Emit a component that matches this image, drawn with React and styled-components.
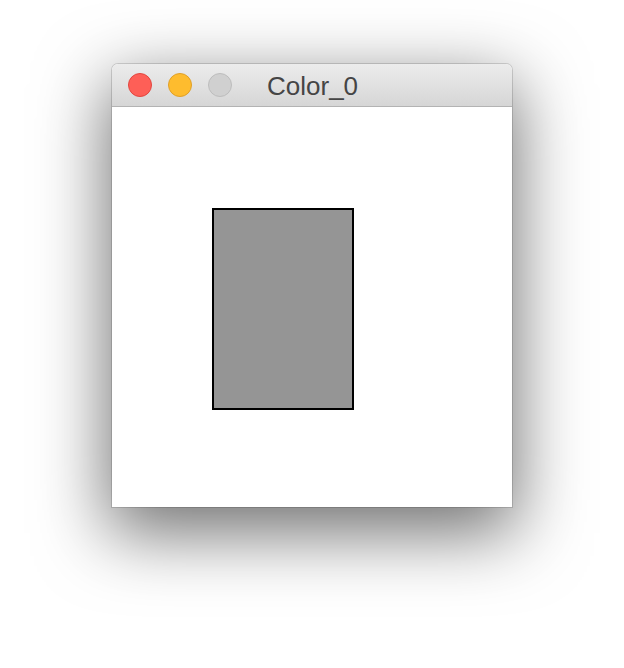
import styled, {createGlobalStyle} from "styled-components";

const GlobalStyle = createGlobalStyle`
  html, body {
    margin: 0;
    padding: 0;
    background: #ffffff;
  }
`;

const Page = styled.div`
  width: 624px;
  height: 668px;
  display: flex;
  justify-content: center;
  align-items: flex-start;
  padding-top: 64px;
  box-sizing: border-box;
  background: #ffffff;
`;

const Window = styled.div`
  width: 400px;
  display: flex;
  flex-direction: column;
  border-radius: 6px 6px 0 0;
  box-shadow: 0 22px 70px 4px rgba(0, 0, 0, 0.56), 0 0 0 1px rgba(0, 0, 0, 0.14);
`;

const TitleBar = styled.div`
  height: 42px;
  display: flex;
  align-items: center;
  padding-left: 16px;
  gap: 16px;
  background: linear-gradient(#ececec, #d6d6d6);
  border-bottom: 1px solid #b3b3b3;
  border-radius: 6px 6px 0 0;
`;

const Light = styled.span`
  width: 24px;
  height: 24px;
  border-radius: 50%;
  box-sizing: border-box;
  background: ${p => p.$fill};
  border: 1px solid ${p => p.$edge};
`;

const Title = styled.span`
  margin-left: 19px;
  padding-top: 2px;
  font-family: "Liberation Sans", Arial, sans-serif;
  font-size: 26px;
  color: #454545;
  line-height: 1;
`;

const Canvas = styled.div`
  width: 400px;
  height: 400px;
  background: #ffffff;
  padding: 101px 0 0 100px;
  box-sizing: border-box;
`;

const Shape = styled.div`
  width: 142px;
  height: 202px;
  box-sizing: border-box;
  background: #959595;
  border: 2px solid #000000;
`;

export default function App() {
  return (
    <>
      <GlobalStyle/>
      <Page>
        <Window>
          <TitleBar>
            <Light $fill="#fe5f57" $edge="#e2463f"/>
            <Light $fill="#febc2e" $edge="#e0a028"/>
            <Light $fill="#d0d0d0" $edge="#bdbdbd"/>
            <Title>Color_0</Title>
          </TitleBar>
          <Canvas>
            <Shape/>
          </Canvas>
        </Window>
      </Page>
    </>
  );
}
